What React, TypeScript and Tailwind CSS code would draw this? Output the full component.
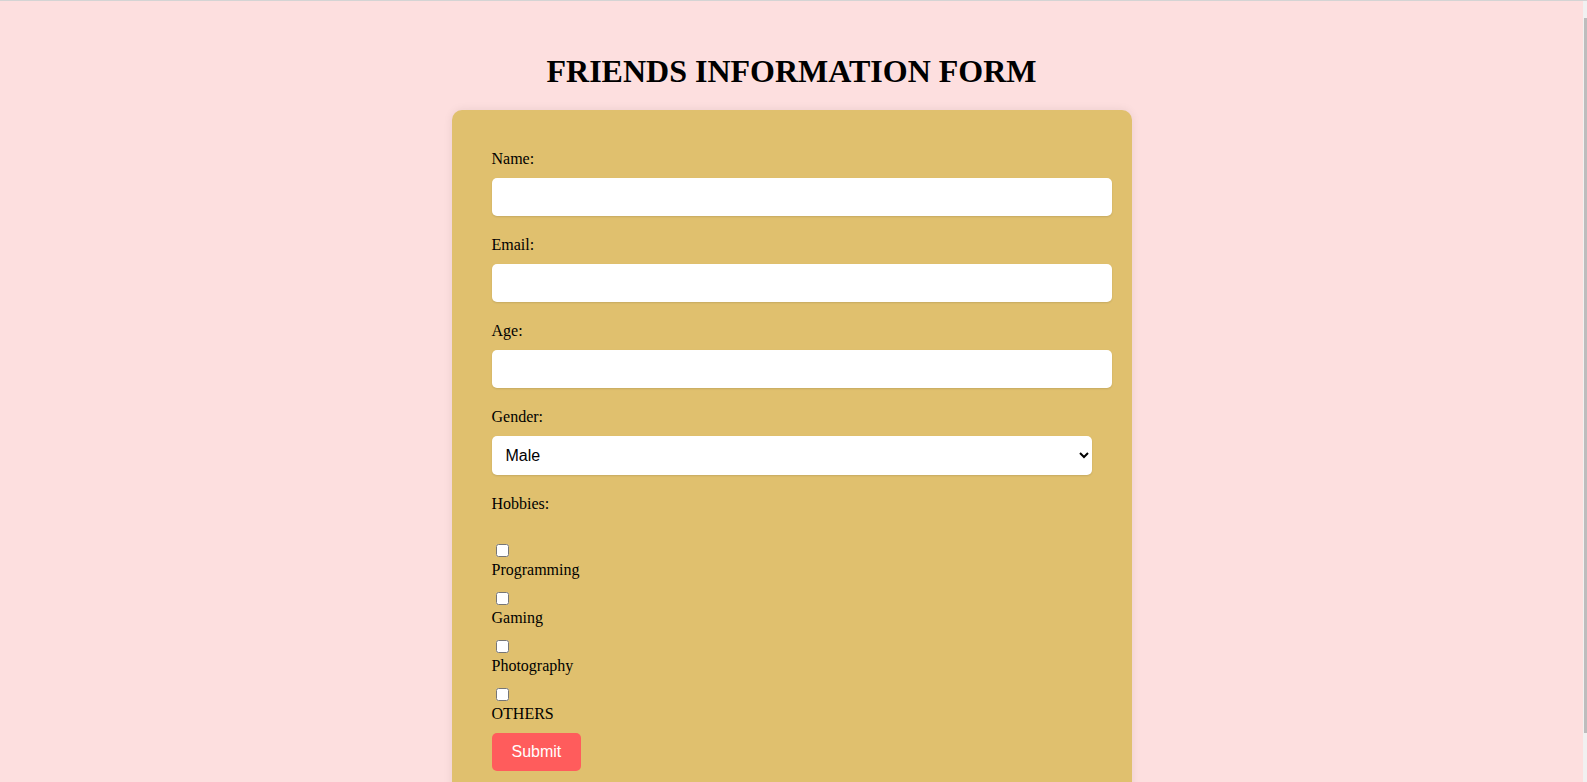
import { useState } from 'react';

const hobbies = ['Programming', 'Gaming', 'Photography', 'OTHERS'];

function TextField({ label, type = 'text' }: { label: string; type?: string }) {
  return (
    <div className="mb-[20px]">
      <label className="mb-[10px] block leading-[18px]">{label}</label>
      <input
        type={type}
        className="block h-[38px] w-[620px] rounded-[5px] bg-white px-[10px] font-['Liberation_Sans',Arial,sans-serif] text-[16px] shadow-[0_1px_2px_rgba(0,0,0,0.12)] outline-none"
      />
    </div>
  );
}

export default function App() {
  const [gender, setGender] = useState('male');
  const [checked, setChecked] = useState<string[]>([]);

  const toggle = (h: string) =>
    setChecked((prev) => (prev.includes(h) ? prev.filter((x) => x !== h) : [...prev, h]));

  return (
    <div className="flex h-[782px] overflow-hidden border-t border-[#d4d4d4] bg-[#fddfdf] font-['Liberation_Serif','Times_New_Roman',serif] text-[16px] text-black">
      <div className="flex flex-1 flex-col items-center pt-[52px]">
        <h1 className="mb-[20px] text-[32px] leading-[37px] font-bold">FRIENDS INFORMATION FORM</h1>

        <form
          className="w-[680px] shrink-0 rounded-[10px] bg-[#e0c06e] p-[40px] shadow-[0_0_10px_rgba(0,0,0,0.08)]"
          onSubmit={(e) => e.preventDefault()}
        >
          <TextField label="Name:" />
          <TextField label="Email:" type="email" />
          <TextField label="Age:" type="number" />

          <div className="mb-[20px]">
            <label className="mb-[10px] block leading-[18px]">Gender:</label>
            <select
              value={gender}
              onChange={(e) => setGender(e.target.value)}
              className="block h-[39px] w-[600px] rounded-[5px] bg-white px-[10px] font-['Liberation_Sans',Arial,sans-serif] text-[16px] shadow-[0_1px_2px_rgba(0,0,0,0.12)] outline-none"
            >
              <option value="male">Male</option>
              <option value="female">Female</option>
              <option value="other">Other</option>
            </select>
          </div>

          <label className="block leading-[18px]">Hobbies:</label>
          <div className="h-[28px]" />

          {hobbies.map((h) => (
            <div key={h} className="pb-[10px]">
              <div className="h-[20px] pt-[3px] pl-[4px]">
                <input
                  type="checkbox"
                  checked={checked.includes(h)}
                  onChange={() => toggle(h)}
                  className="m-0 block h-[13px] w-[13px]"
                />
              </div>
              <label className="block leading-[18px]">{h}</label>
            </div>
          ))}

          <button
            type="submit"
            className="rounded-[5px] bg-[#ff5c5c] px-[20px] py-[10px] font-['Liberation_Sans',Arial,sans-serif] text-[16px] leading-[18px] text-white"
          >
            Submit
          </button>
        </form>
      </div>

      <div className="flex w-[4px] justify-end bg-[#f1f1f1]">
        <div className="mt-[17px] h-[715px] w-[3px] bg-[#bdbdbd]" />
      </div>
    </div>
  );
}
